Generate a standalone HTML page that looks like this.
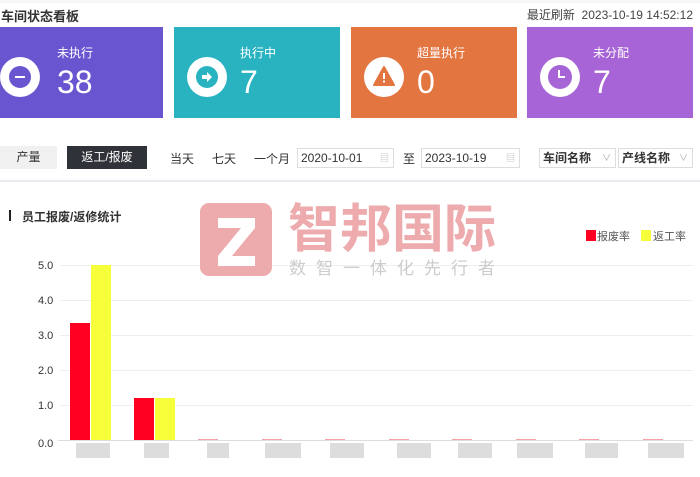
<!DOCTYPE html>
<html><head><meta charset="utf-8"><style>
*{margin:0;padding:0;box-sizing:border-box}
body{width:700px;height:477px;background:#fff;font-family:"Liberation Sans","Noto Sans CJK SC",sans-serif;position:relative;overflow:hidden;color:#333}
.abs{position:absolute;white-space:nowrap}
.card{position:absolute;top:27px;height:91px;color:#fff}
.circ{position:absolute;left:0;top:29px;width:40px;height:40px;border-radius:50%;background:#fff}
.lbl{position:absolute;font-size:12px}
.num{position:absolute;font-size:32px;line-height:32px}
.btn{position:absolute;top:146px;height:23px;font-size:12px;line-height:23px;text-align:center}
.inp{position:absolute;top:148px;height:20px;border:1px solid #ddd;font-size:12px;line-height:18px;padding-left:3px;color:#333;white-space:nowrap}
</style></head><body>
<div class="abs" style="left:0;top:0;width:700px;height:3px;background:#f6f6f6"></div>
<div class="abs" style="left:1px;top:6px;font-size:13px;font-weight:bold;color:#333">车间状态看板</div>
<div class="abs" style="right:7px;top:6px;font-size:12px;color:#444">最近刷新&nbsp; 2023-10-19 14:52:12</div>

<div class="card" style="left:0;width:163px;background:#6a55d0">
 <div class="circ" style="left:0;top:30px"><div class="abs" style="left:9px;top:9px;width:22px;height:22px;border-radius:50%;background:#6a55d0"></div><div class="abs" style="left:15px;top:19px;width:10px;height:2px;background:#fff"></div></div>
 <div class="lbl" style="left:57px;top:17px">未执行</div>
 <div class="num" style="left:57px;top:39px">38</div>
</div>
<div class="card" style="left:174px;width:166px;background:#29b3c1">
 <div class="circ" style="left:13px;top:30px"><div class="abs" style="left:9px;top:9px;width:22px;height:22px;border-radius:50%;background:#29b3c1"></div><svg class="abs" style="left:14px;top:14px" width="12" height="12" viewBox="0 0 12 12"><path d="M1 4h5V1l5 5-5 5V8H1z" fill="#fff"/></svg></div>
 <div class="lbl" style="left:66px;top:17px">执行中</div>
 <div class="num" style="left:66px;top:39px">7</div>
</div>
<div class="card" style="left:351px;width:166px;background:#e37540">
 <div class="circ" style="left:13px;top:30px"><svg class="abs" style="left:9px;top:9px" width="22" height="20" viewBox="0 0 22 20"><path d="M11 1L21 19H1z" fill="#e37540" stroke="#e37540" stroke-linejoin="round" stroke-width="2"/><rect x="10" y="7" width="2" height="6" fill="#fff"/><rect x="10" y="14.5" width="2" height="2" fill="#fff"/></svg></div>
 <div class="lbl" style="left:66px;top:17px">超量执行</div>
 <div class="num" style="left:66px;top:39px">0</div>
</div>
<div class="card" style="left:527px;width:166px;background:#a764d6">
 <div class="circ" style="left:13px;top:30px"><div class="abs" style="left:8px;top:8px;width:24px;height:24px;border-radius:50%;background:#a764d6"></div><div class="abs" style="left:18px;top:13px;width:2px;height:8px;background:#fff"></div><div class="abs" style="left:18px;top:19px;width:7px;height:2px;background:#fff"></div></div>
 <div class="lbl" style="left:66px;top:17px">未分配</div>
 <div class="num" style="left:66px;top:39px">7</div>
</div>

<div class="btn" style="left:0;width:57px;background:#f0f0f0;color:#333">产量</div>
<div class="btn" style="left:67px;width:80px;background:#2f3238;color:#fff">返工/报废</div>
<div class="abs" style="left:170px;top:150px;font-size:12px">当天</div>
<div class="abs" style="left:212px;top:150px;font-size:12px">七天</div>
<div class="abs" style="left:254px;top:150px;font-size:12px">一个月</div>
<div class="inp" style="left:297px;width:97px">2020-10-01<span style="position:absolute;right:4px;color:#bbb;font-size:9px">▤</span></div>
<div class="abs" style="left:403px;top:150px;font-size:12px">至</div>
<div class="inp" style="left:421px;width:99px">2023-10-19<span style="position:absolute;right:4px;color:#bbb;font-size:9px">▤</span></div>
<div class="inp" style="left:539px;width:77px;font-weight:bold">车间名称<span style="position:absolute;right:4px;color:#aaa;font-weight:normal;font-size:9px">∨</span></div>
<div class="inp" style="left:618px;width:75px;font-weight:bold">产线名称<span style="position:absolute;right:4px;color:#aaa;font-weight:normal;font-size:9px">∨</span></div>
<div class="abs" style="left:0;top:180px;width:700px;height:2px;background:#e8ebef"></div>

<div class="abs" style="left:9px;top:210px;width:2px;height:11px;background:#222"></div>
<div class="abs" style="left:22px;top:208px;font-size:12px;font-weight:bold">员工报废/返修统计</div>

<svg class="abs" style="left:0;top:0" width="700" height="477">
 <g stroke="#eee" stroke-width="1">
  <line x1="60" y1="265.5" x2="693" y2="265.5"/><line x1="60" y1="300.5" x2="693" y2="300.5"/><line x1="60" y1="335.5" x2="693" y2="335.5"/><line x1="60" y1="370.5" x2="693" y2="370.5"/><line x1="60" y1="405.5" x2="693" y2="405.5"/>
 </g>
 <g font-size="11" fill="#333" font-family="Liberation Sans">
  <text x="38" y="269">5.0</text><text x="38" y="304">4.0</text><text x="38" y="339">3.0</text><text x="38" y="374">2.0</text><text x="38" y="409">1.0</text><text x="38" y="447">0.0</text>
 </g>
 <rect x="70" y="323" width="20" height="117" fill="#ff0022"/><rect x="91" y="265" width="20" height="175" fill="#f6ff3a"/>
 <rect x="134" y="398" width="20" height="42" fill="#ff0022"/><rect x="155" y="398" width="20" height="42" fill="#f6ff3a"/>
 <g fill="#f8a0a8"><rect x="198" y="439" width="20" height="1"/><rect x="262" y="439" width="20" height="1"/><rect x="325" y="439" width="20" height="1"/><rect x="389" y="439" width="20" height="1"/><rect x="452" y="439" width="20" height="1"/><rect x="516" y="439" width="20" height="1"/><rect x="579" y="439" width="20" height="1"/><rect x="643" y="439" width="20" height="1"/></g>
 <line x1="58" y1="440.5" x2="693" y2="440.5" stroke="#ddd"/>
 <g fill="#ddd"><rect x="76" y="443" width="34" height="15"/><rect x="144" y="443" width="25" height="15"/><rect x="207" y="443" width="22" height="15"/><rect x="265" y="443" width="36" height="15"/><rect x="330" y="443" width="34" height="15"/><rect x="397" y="443" width="34" height="15"/><rect x="458" y="443" width="34" height="15"/><rect x="517" y="443" width="36" height="15"/><rect x="585" y="443" width="33" height="15"/><rect x="648" y="443" width="36" height="15"/></g>
 <rect x="586" y="230" width="10" height="11" fill="#ff0022"/><rect x="641" y="230" width="10" height="11" fill="#f6ff3a"/>
 <g font-size="11" fill="#555" font-family="Noto Sans CJK SC"><text x="597" y="240">报废率</text><text x="653" y="240">返工率</text></g>
 <rect x="200" y="203" width="72" height="73" rx="9" fill="#eeabae"/>
 <path d="M218 218h37v10l-23 28h23v10h-37v-10l23-28h-23z" fill="#fff"/>
 <g fill="#eeabae" font-size="52" font-weight="bold" font-family="Noto Sans CJK SC"><text x="288" y="247">智邦国际</text></g>
 <g fill="#ccc" font-size="17" font-family="Noto Sans CJK SC"><text x="289" y="274" letter-spacing="10">数智一体化先行者</text></g>
</svg>
</body></html>
